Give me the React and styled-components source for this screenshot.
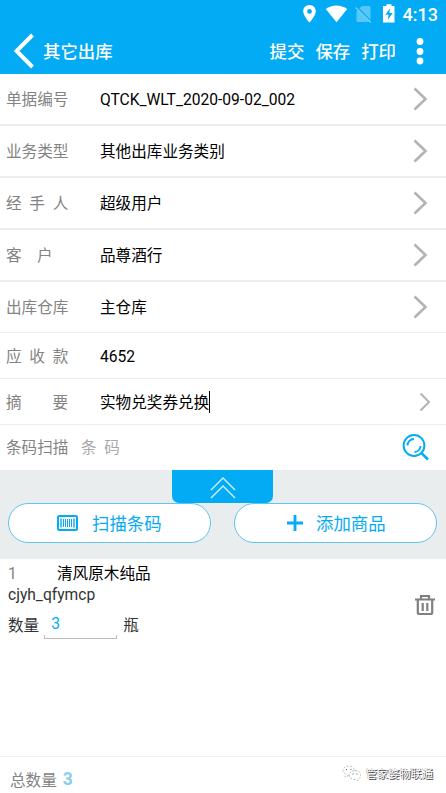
import React from 'react';
import styled, { createGlobalStyle } from 'styled-components';

const GlobalStyle = createGlobalStyle`
  * {
    box-sizing: border-box;
  }
  body {
    margin: 0;
    background: #fff;
    font-family: Roboto, 'Noto Sans CJK SC', sans-serif;
  }
`

const fields = [
  { label: '单据编号', value: 'QTCK_WLT_2020-09-02_002', height: 52, line: 2, arrow: true },
  { label: '业务类型', value: '其他出库业务类别', height: 52, line: 2, arrow: true },
  { label: '经  手  人', value: '超级用户', height: 52, line: 2, arrow: true },
  { label: '客    户', value: '品尊酒行', height: 52, line: 2, arrow: true },
  { label: '出库仓库', value: '主仓库', height: 51, line: 1, arrow: true },
  { label: '应  收  款', value: '4652', height: 46, line: 1 },
  { label: '摘        要', value: '实物兑奖券兑换', height: 46, line: 1, arrow: true, small: true, editing: true },
];

const StatusIcons = () => (
  <svg width="100" height="28" viewBox="0 0 100 28">
    <path fill="#fff" fillRule="evenodd" d="M9.5 5C5.8 5 3.2 7.8 3.2 11.3c0 4.5 6.3 11.3 6.3 11.3s6.3-6.8 6.3-11.3C15.8 7.8 13.2 5 9.5 5zm0 4a2.4 2.4 0 1 1 0 4.800 2.400 2.400 0 0 1 0-4.800z" />
    <path fill="#fff" d="M36.500 22.300 25.800 9C32 4.300 41 4.300 47.200 9z" />
    <path fill="#56c8f8" d="M62 6H69q1.500 0 1.500 1.500V22H58q-1.500 0-1.500-1.500V11z" />
    <path stroke="#03abf5" strokeWidth="2" d="M56.500 7 71.500 22" />
    <path stroke="#72d0f8" strokeWidth="1.200" d="M55.500 7.500 71 22.500" />
    <path fill="#fff" fillRule="evenodd" d="M86.500 4.300h5v1.800h3V22.500H83V6.100h3.500zM90 8.200l-4.600 6.500h3.200l-.7 5.300 4.800-7h-3.300z" />
  </svg>
);

const Chevron = ({ small }) => small ? (
  <svg width="12" height="20" viewBox="0 0 12 20">
    <path d="M1.500 1.500 10 10 1.500 18.500" fill="none" stroke="#b3b3b3" strokeWidth="2" />
  </svg>
) : (
  <svg width="15" height="24" viewBox="0 0 15 24">
    <path d="M1.500 1.500 12.500 12 1.500 22.500" fill="none" stroke="#b3b3b3" strokeWidth="2.600" />
  </svg>
);

const SearchIcon = () => (
  <svg width="28" height="28" viewBox="0 0 28 28" fill="none" stroke="#03abf5" strokeWidth="2">
    <circle cx="12" cy="11.500" r="10.400" />
    <path d="M19.300 18.800 26 25.500" strokeWidth="2.600" />
    <path d="M5.500 11.500A6.500 6.500 0 0 1 12 5M18.500 12A6.500 6.500 0 0 1 12.500 18" />
  </svg>
);

const App = () => {
  return (
    <Screen>
      <GlobalStyle />
      <StatusBar>
        <StatusIcons />
        <span>4:13</span>
      </StatusBar>
      <TitleBar>
        <svg width="21" height="36" viewBox="0 0 21 36">
          <path d="M18.500 2 2.500 18 18.500 34" fill="none" stroke="#fff" strokeWidth="4" />
        </svg>
        <Title>其它出库</Title>
        <Action>提交</Action>
        <Action>保存</Action>
        <Action>打印</Action>
        <svg width="8" height="28" viewBox="0 0 8 28" fill="#fff">
          <circle cx="4" cy="4.500" r="3.400" />
          <circle cx="4" cy="14.500" r="3.400" />
          <circle cx="4" cy="24" r="3.400" />
        </svg>
      </TitleBar>
      {fields.map((field) => (
        <Row key={field.label} $height={field.height} $line={field.line} $small={field.small}>
          <Label>{field.label}</Label>
          <Value>{field.value}</Value>
          {field.editing && <Caret />}
          {field.arrow && <Chevron small={field.small} />}
        </Row>
      ))}
      <ScanRow>
        <ScanLabel>条码扫描</ScanLabel>
        <Placeholder>条  码</Placeholder>
        <SearchIcon />
      </ScanRow>
      <Panel>
        <Handle>
          <svg width="26" height="22" viewBox="0 0 26 22" fill="none" stroke="#d5f0fc" strokeWidth="1.400">
            <path d="M1 13 13 1 25 13M1 21 13 9 25 21" />
          </svg>
        </Handle>
        <Buttons>
          <PillButton>
            <svg width="21" height="16" viewBox="0 0 21 16" fill="none" stroke="#03abf5">
              <rect x="1" y="1" width="19" height="14" rx="1.500" strokeWidth="2" />
              <path d="M4 3.500v9M17 3.500v9" strokeWidth="1.400" />
              <path d="M6.500 4v8M8.500 4v8M10.500 4v8M12.500 4v8M14.500 4v8" strokeWidth="1" />
            </svg>
            <ButtonText>扫描条码</ButtonText>
          </PillButton>
          <PillButton $narrow>
            <svg width="16" height="16" viewBox="0 0 16 16">
              <path d="M8 0v16M0 8h16" stroke="#03abf5" strokeWidth="2.800" />
            </svg>
            <ButtonText>添加商品</ButtonText>
          </PillButton>
        </Buttons>
      </Panel>
      <Item>
        <ItemInfo>
          <ItemName>
            <ItemIndex>1</ItemIndex>
            清风原木纯品
          </ItemName>
          <ItemCode>cjyh_qfymcp</ItemCode>
          <Quantity>
            <span>数量</span>
            <QuantityInput>3</QuantityInput>
            <span>瓶</span>
          </Quantity>
        </ItemInfo>
        <svg width="20" height="22" viewBox="0 0 20 22" fill="none" stroke="#808080" strokeWidth="2.200">
          <path d="M0 5.500h20M6 5V2h8V5M2.800 5.500V18.500q0 1.500 1.700 1.500h11q1.700 0 1.700-1.500V5.500M7.700 9v8M12.300 9v8" />
        </svg>
      </Item>
      <Footer>
        总数量
        <Total>3</Total>
        <Watermark>
          <svg width="19" height="16" viewBox="0 0 19 16" fill="none" stroke="#aaa" strokeWidth=".8" strokeDasharray="2 1.500">
            <path d="M7 10.500 3 12 3.500 9C-1 6 1 1 6.500 1c3.500 0 5.500 2 6 4" />
            <path d="M13 5.500c7 0 7.500 7 3 8.500v1.500l-2-1C5 15 5.500 5.500 13 5.500z" />
            <path d="M4 4.500h1M8.500 4.500h1M10.500 9h1M14.500 9h1" stroke="#555" strokeWidth="1.200" strokeDasharray="none" />
          </svg>
          管家婆物联通
        </Watermark>
      </Footer>
    </Screen>
  );
}

const Screen = styled.div`
  width: 446px;
  height: 793px;
  display: flex;
  flex-direction: column;
  overflow: hidden;
  background: #fff;
`

const StatusBar = styled.div`
  height: 28px;
  flex: none;
  display: flex;
  justify-content: flex-end;
  align-items: center;
  padding-right: 8px;
  background: #03abf5;
  color: #fff;
  font-size: 18px;
  font-weight: 500;
  svg {
    margin-right: 3px;
  }
`

const TitleBar = styled.div`
  height: 46px;
  flex: none;
  display: flex;
  align-items: center;
  padding: 0 22px 0 14px;
  background: #03abf5;
  color: #fff;
  font-size: 17.4px;
  font-weight: 500;
  line-height: 26px;
`

const Title = styled.div`
  flex: 1;
  padding: 1px 0 0 8px;
`

const Action = styled.div`
  margin-right: 11px;
  padding-top: 1px;
  & + svg {
    margin-left: 9px;
  }
`

const Row = styled.div`
  height: ${(props) => props.$height}px;
  flex: none;
  display: flex;
  align-items: center;
  padding: 0 ${(props) => (props.$small ? 15 : 18)}px 0 6px;
  border-bottom: ${(props) => props.$line}px solid #e9eeef;
  font-size: 15.6px;
  line-height: 24px;
  white-space: pre;
  svg {
    margin-left: auto;
  }
`

const Label = styled.div`
  width: 94px;
  padding-top: 2px;
  color: #838383;
`

const Value = styled.div`
  padding-top: 2px;
  color: #000;
`

const Caret = styled.div`
  width: 1px;
  height: 22px;
  background: #000;
`

const ScanRow = styled(Row)`
  height: 45px;
  border: none;
  padding-right: 16px;
`

const ScanLabel = styled(Label)`
  width: 75px;
  padding-top: 0;
`

const Placeholder = styled.div`
  color: #a8a8a8;
`

const Panel = styled.div`
  height: 89px;
  flex: none;
  display: flex;
  flex-direction: column;
  align-items: center;
  background: #e9edee;
`

const Handle = styled.div`
  width: 101px;
  height: 33px;
  display: flex;
  justify-content: center;
  align-items: center;
  margin-right: 1px;
  padding-top: 3px;
  background: #03abf5;
  border-radius: 0 0 7px 7px;
`

const Buttons = styled.div`
  align-self: stretch;
  display: flex;
  justify-content: space-between;
  padding: 0 9px 0 8px;
`

const PillButton = styled.div`
  width: 203px;
  height: 40px;
  display: flex;
  align-items: center;
  padding-left: ${(props) => (props.$narrow ? 52 : 48)}px;
  gap: ${(props) => (props.$narrow ? 13 : 14)}px;
  background: #fff;
  border: 1px solid #5fc5ee;
  border-radius: 20px;
  color: #03abf5;
  font-size: 17.4px;
`

const ButtonText = styled.span`
  padding-bottom: 2px;
`

const Item = styled.div`
  flex: 1;
  display: flex;
  justify-content: space-between;
  padding: 4px 11px 0 8px;
  color: #333;
  font-size: 15.6px;
  svg {
    margin-top: 31px;
  }
`

const ItemInfo = styled.div`
  line-height: 22px;
`

const ItemName = styled.div`
  display: flex;
  color: #000;
`

const ItemIndex = styled.div`
  width: 49px;
  color: #838383;
`

const ItemCode = styled.div`
  line-height: 21px;
`

const Quantity = styled.div`
  display: flex;
  align-items: center;
  height: 38px;
  span {
    padding-top: 2px;
  }
`

const QuantityInput = styled.div`
  width: 73px;
  height: 28px;
  margin: 0 6px 0 5px;
  padding: 1px 6px 4px;
  color: #03abf5;
  border: 1px solid transparent;
  border-bottom-color: #bcbcbc;
  background:
    linear-gradient(#bcbcbc, #bcbcbc) left bottom / 1px 4px no-repeat,
    linear-gradient(#bcbcbc, #bcbcbc) right bottom / 1px 4px no-repeat;
  background-origin: border-box;
`

const Footer = styled.div`
  height: 37px;
  flex: none;
  display: flex;
  align-items: center;
  padding: 7px 13px 0 10px;
  border-top: 1px solid #f0f0f0;
  color: #838383;
  font-size: 15.6px;
`

const Total = styled.div`
  margin-left: 6px;
  color: #87cdec;
  font-size: 17.5px;
  font-weight: 700;
`

const Watermark = styled.div`
  display: flex;
  align-items: center;
  gap: 5px;
  margin: -11px 0 0 auto;
  color: #fff;
  font-size: 11.2px;
  text-shadow: 1px 1px 0 #444, -.5px -.5px 0 #999;
`

export default App;
